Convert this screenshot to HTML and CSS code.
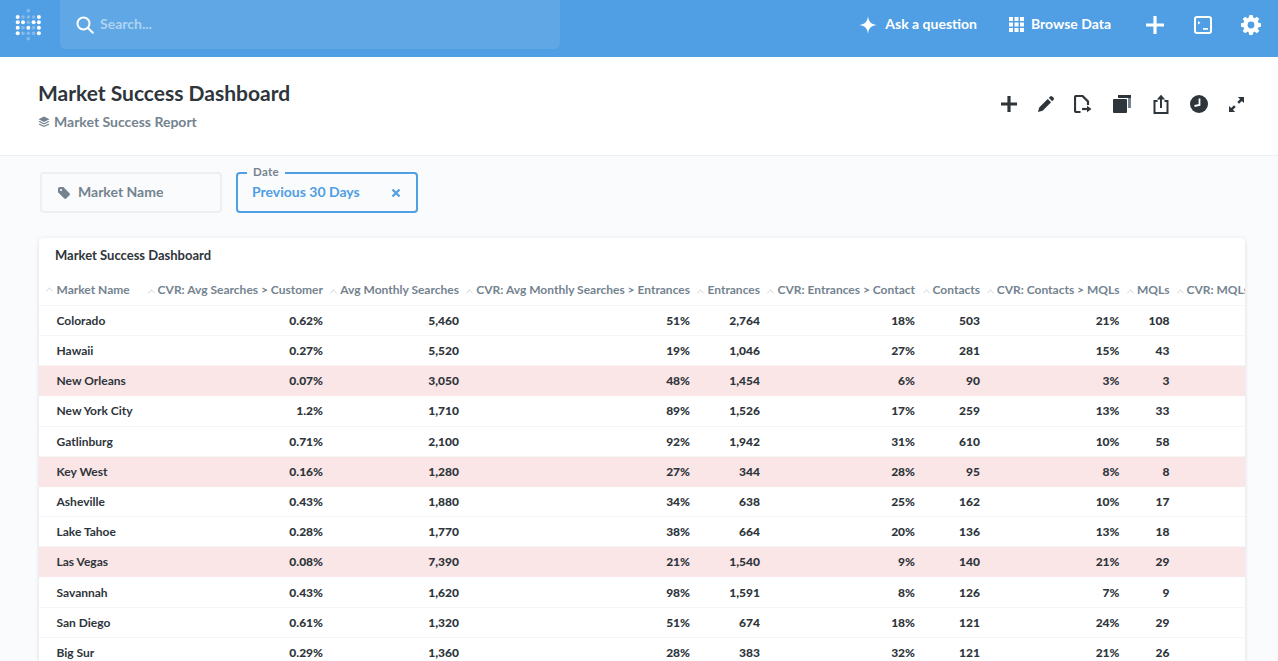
FILE: index.html
```html
<!DOCTYPE html>
<html lang="en">
<head>
<meta charset="utf-8">
<title>Market Success Dashboard</title>
<link rel="stylesheet" href="styles.css">
</head>
<body>
<header class="nav">
  <svg class="logo" width="26" height="32" viewBox="0 0 26 32" fill="#fff">
    <g opacity=".3"><circle cx="13.300" cy="1.700" r="1.800"/><circle cx="8" cy="8" r="1.800"/><circle cx="13.300" cy="8" r="1.800"/><circle cx="18.600" cy="8" r="1.800"/><circle cx="13.300" cy="13.300" r="1.800"/><circle cx="8" cy="18.700" r="1.800"/><circle cx="18.600" cy="18.700" r="1.800"/><circle cx="8" cy="24.300" r="1.800"/><circle cx="13.300" cy="24.300" r="1.800"/><circle cx="18.600" cy="24.300" r="1.800"/><circle cx="13.300" cy="29.700" r="1.800"/></g>
    <circle cx="2.700" cy="8" r="2"/><circle cx="23.900" cy="8" r="2"/><circle cx="2.700" cy="13.300" r="2"/><circle cx="8" cy="13.300" r="2"/><circle cx="18.600" cy="13.300" r="2"/><circle cx="23.900" cy="13.300" r="2"/><circle cx="2.700" cy="18.700" r="2"/><circle cx="13.300" cy="18.700" r="2"/><circle cx="23.900" cy="18.700" r="2"/><circle cx="2.700" cy="24.300" r="2"/><circle cx="23.900" cy="24.300" r="2"/>
  </svg>
  <div class="search">
    <svg width="18" height="18" viewBox="0 0 18 18" fill="none" stroke="#fff" stroke-width="2"><circle cx="7.500" cy="7.500" r="6"/><path d="M12 12l4.800 4.800" stroke-linecap="round"/></svg>
    <span>Search...</span>
  </div>
  <div class="nav-actions">
    <a class="nav-link ask">
      <svg width="18" height="18" viewBox="0 0 18 18" fill="#fff"><path d="M9 0c.6 5.600 2.800 8 8.500 9C11.800 10 9.600 12.400 9 18 8.400 12.400 6.200 10 .5 9 6.200 8 8.400 5.600 9 0z"/></svg>
      <span>Ask a question</span>
    </a>
    <a class="nav-link browse">
      <svg width="15" height="15" viewBox="0 0 15 15" fill="#fff"><rect width="4" height="4"/><rect x="5.500" width="4" height="4"/><rect x="11" width="4" height="4"/><rect y="5.500" width="4" height="4"/><rect x="5.500" y="5.500" width="4" height="4"/><rect x="11" y="5.500" width="4" height="4"/><rect y="11" width="4" height="4"/><rect x="5.500" y="11" width="4" height="4"/><rect x="11" y="11" width="4" height="4"/></svg>
      <span>Browse Data</span>
    </a>
    <svg class="plus" width="18" height="18" viewBox="0 0 18 18" fill="#fff"><path d="M7.400 0h3.200v7.400H18v3.200h-7.400V18H7.400v-7.400H0V7.400h7.400z"/></svg>
    <svg class="sql" width="18" height="18" viewBox="0 0 18 18"><rect x="1" y="1" width="16" height="16" rx="2" fill="none" stroke="#fff" stroke-width="2"/><path d="M4 5l2.500 1.800L4 8.600zM9 12h5v1.800H9z" fill="#fff"/></svg>
    <svg class="gear" width="20" height="20" viewBox="0 0 20 20"><path fill="#fff" fill-rule="evenodd" d="M8.300 0h3.400l.5 2.600 1.500.6 2.200-1.500 2.400 2.400-1.500 2.200.6 1.500 2.600.5v3.400l-2.600.5-.6 1.500 1.500 2.200-2.400 2.400-2.200-1.500-1.500.6-.5 2.600H8.300l-.5-2.600-1.500-.6-2.200 1.500-2.400-2.400 1.500-2.200-.6-1.500L0 11.700V8.300l2.600-.5.6-1.500-1.500-2.200 2.400-2.400 2.200 1.500 1.500-.6zM10 6.600a3.400 3.400 0 1 0 0 6.800 3.400 3.400 0 0 0 0-6.800z"/></svg>
  </div>
</header>

<section class="dash-head">
  <div class="dash-title">
    <h1>Market Success Dashboard</h1>
    <div class="collection">
      <svg width="12" height="12" viewBox="0 0 12 12" fill="#74838f"><path d="M6 .5l5.500 2.700L6 5.900.5 3.200z"/><path d="M1.800 5.100L6 7.200l4.200-2.100 1.300.7L6 8.500.5 5.800z"/><path d="M1.800 7.700L6 9.800l4.200-2.100 1.300.7L6 11.100.5 8.400z"/></svg>
      <span>Market Success Report</span>
    </div>
  </div>
  <div class="dash-tools">
    <svg width="18" height="18" viewBox="0 0 18 18" fill="#2e353b"><path d="M7.400 1h3.200v6.400H17v3.200h-6.400V17H7.400v-6.400H1V7.400h6.400z"/></svg>
    <svg width="18" height="18" viewBox="0 0 18 18" fill="#2e353b"><path d="M1 17l1.200-4.600 8.500-8.500 3.400 3.400-8.500 8.500zM11.800 2.800l1.400-1.400a1.400 1.400 0 0 1 2 0l1.400 1.400a1.400 1.400 0 0 1 0 2l-1.400 1.400z"/></svg>
    <svg width="18" height="18" viewBox="0 0 18 18" fill="none" stroke="#2e353b" stroke-width="2.200"><path d="M6.500 17H2.500A1.500 1.500 0 0 1 1 15.500v-13A1.500 1.500 0 0 1 2.500 1h6L14 6.500V10"/><path d="M8 14h6"/><path d="M13 10.800l4.500 3.200-4.500 3.200z" fill="#2e353b" stroke="none"/></svg>
    <svg width="18" height="18" viewBox="0 0 18 18"><path d="M5 0h13v13h-3V3H5z" fill="#74838f"/><path d="M5 0h13v3H5z" fill="#2e353b"/><rect y="4" width="14" height="14" rx="1" fill="#2e353b"/></svg>
    <svg width="16" height="20" viewBox="0 0 16 20" fill="none" stroke="#2e353b" stroke-width="2"><path d="M4.500 7H1.500v12h13V7h-3"/><path d="M8 14V2.500"/><path d="M3.800 5.500L8 .8l4.200 4.700z" fill="#2e353b" stroke="none"/></svg>
    <svg width="18" height="18" viewBox="0 0 18 18"><circle cx="9" cy="9" r="9" fill="#2e353b"/><path d="M9.500 3.500v6.500L4.500 11" fill="none" stroke="#fff" stroke-width="1.800"/></svg>
    <svg width="15" height="15" viewBox="0 0 16 16" fill="#2e353b"><path d="M9.500 0H16v6.500l-2.300-2.300-3 3-1.900-1.900 3-3zM6.500 16H0V9.500l2.300 2.300 3-3 1.900 1.900-3 3z"/></svg>
  </div>
</section>

<section class="filters">
  <div class="filter idle">
    <svg width="12" height="12" viewBox="0 0 14 14" fill="#74838f"><path d="M0 2.200A2.200 2.200 0 0 1 2.200 0h4l7 7a2 2 0 0 1 0 2.800l-3.400 3.400a2 2 0 0 1-2.800 0l-7-7zM3.500 2.200a1.300 1.300 0 1 0 0 2.600 1.300 1.300 0 0 0 0-2.600z" fill-rule="evenodd"/></svg>
    <span>Market Name</span>
  </div>
  <div class="filter active">
    <span class="legend">Date</span>
    <span>Previous 30 Days</span>
    <svg width="10" height="10" viewBox="0 0 10 10" stroke="#509ee3" stroke-width="2.200"><path d="M1.500 1.500l7 7M8.500 1.500l-7 7"/></svg>
  </div>
</section>

<main class="card">
  <h2>Market Success Dashboard</h2>
  <div class="grid">
    <div class="row head">
      <div class="cell name"><i></i>Market Name</div>
      <div class="cell"><i></i>CVR: Avg Searches &gt; Customer</div>
      <div class="cell"><i></i>Avg Monthly Searches</div>
      <div class="cell"><i></i>CVR: Avg Monthly Searches &gt; Entrances</div>
      <div class="cell"><i></i>Entrances</div>
      <div class="cell"><i></i>CVR: Entrances &gt; Contact</div>
      <div class="cell"><i></i>Contacts</div>
      <div class="cell"><i></i>CVR: Contacts &gt; MQLs</div>
      <div class="cell"><i></i>MQLs</div>
      <div class="cell last"><i></i>CVR: MQLs &gt; Customers</div>
    </div>
    <div class="row"><div class="cell name">Colorado</div><div class="cell">0.62%</div><div class="cell">5,460</div><div class="cell">51%</div><div class="cell">2,764</div><div class="cell">18%</div><div class="cell">503</div><div class="cell">21%</div><div class="cell">108</div></div>
    <div class="row"><div class="cell name">Hawaii</div><div class="cell">0.27%</div><div class="cell">5,520</div><div class="cell">19%</div><div class="cell">1,046</div><div class="cell">27%</div><div class="cell">281</div><div class="cell">15%</div><div class="cell">43</div></div>
    <div class="row low"><div class="cell name">New Orleans</div><div class="cell">0.07%</div><div class="cell">3,050</div><div class="cell">48%</div><div class="cell">1,454</div><div class="cell">6%</div><div class="cell">90</div><div class="cell">3%</div><div class="cell">3</div></div>
    <div class="row"><div class="cell name">New York City</div><div class="cell">1.2%</div><div class="cell">1,710</div><div class="cell">89%</div><div class="cell">1,526</div><div class="cell">17%</div><div class="cell">259</div><div class="cell">13%</div><div class="cell">33</div></div>
    <div class="row"><div class="cell name">Gatlinburg</div><div class="cell">0.71%</div><div class="cell">2,100</div><div class="cell">92%</div><div class="cell">1,942</div><div class="cell">31%</div><div class="cell">610</div><div class="cell">10%</div><div class="cell">58</div></div>
    <div class="row low"><div class="cell name">Key West</div><div class="cell">0.16%</div><div class="cell">1,280</div><div class="cell">27%</div><div class="cell">344</div><div class="cell">28%</div><div class="cell">95</div><div class="cell">8%</div><div class="cell">8</div></div>
    <div class="row"><div class="cell name">Asheville</div><div class="cell">0.43%</div><div class="cell">1,880</div><div class="cell">34%</div><div class="cell">638</div><div class="cell">25%</div><div class="cell">162</div><div class="cell">10%</div><div class="cell">17</div></div>
    <div class="row"><div class="cell name">Lake Tahoe</div><div class="cell">0.28%</div><div class="cell">1,770</div><div class="cell">38%</div><div class="cell">664</div><div class="cell">20%</div><div class="cell">136</div><div class="cell">13%</div><div class="cell">18</div></div>
    <div class="row low"><div class="cell name">Las Vegas</div><div class="cell">0.08%</div><div class="cell">7,390</div><div class="cell">21%</div><div class="cell">1,540</div><div class="cell">9%</div><div class="cell">140</div><div class="cell">21%</div><div class="cell">29</div></div>
    <div class="row"><div class="cell name">Savannah</div><div class="cell">0.43%</div><div class="cell">1,620</div><div class="cell">98%</div><div class="cell">1,591</div><div class="cell">8%</div><div class="cell">126</div><div class="cell">7%</div><div class="cell">9</div></div>
    <div class="row"><div class="cell name">San Diego</div><div class="cell">0.61%</div><div class="cell">1,320</div><div class="cell">51%</div><div class="cell">674</div><div class="cell">18%</div><div class="cell">121</div><div class="cell">24%</div><div class="cell">29</div></div>
    <div class="row"><div class="cell name">Big Sur</div><div class="cell">0.29%</div><div class="cell">1,360</div><div class="cell">28%</div><div class="cell">383</div><div class="cell">32%</div><div class="cell">121</div><div class="cell">21%</div><div class="cell">26</div></div>
  </div>
</main>
</body>
</html>
```

FILE: styles.css
```css
* { box-sizing: border-box; }
html, body { height: 100%; }
body {
  margin: 0;
  height: 661px;
  overflow: hidden;
  background: #f9fbfc;
  color: #2e353b;
  font-family: Lato, "Open Sans", sans-serif;
}

.nav {
  display: flex;
  align-items: flex-start;
  height: 57px;
  background: #509ee3;
  padding-left: 15px;
}
.logo { margin-top: 9px; flex: none; }
.search {
  display: flex;
  align-items: center;
  gap: 6px;
  width: 500px;
  height: 49px;
  margin-left: 19px;
  padding-left: 16px;
  background: #60a7e6;
  border-radius: 0 0 6px 6px;
  font-size: 14px;
  font-weight: 700;
  color: rgba(255, 255, 255, .5);
}
.search span, .nav-link span, .filter > span:not(.legend) { padding-bottom: 2px; }
.nav-actions {
  display: flex;
  align-items: center;
  height: 49px;
  margin-left: auto;
  padding-right: 17px;
  color: #fff;
  font-size: 14px;
  font-weight: 700;
}
.nav-link { display: flex; align-items: center; }
.ask { gap: 8px; }
.browse { gap: 7px; margin-left: 32px; }
.plus { margin-left: 35px; }
.sql { margin-left: 30px; }
.gear { margin-left: 29px; }

.dash-head {
  display: flex;
  justify-content: space-between;
  height: 99px;
  padding: 24px 34px 0 38px;
  background: #fff;
  border-bottom: 1px solid #f0f0f0;
}
.dash-title h1 {
  margin: 0;
  font-size: 21px;
  line-height: 23px;
  font-weight: 700;
}
.collection {
  display: flex;
  align-items: center;
  gap: 4px;
  margin-top: 9px;
  font-size: 14px;
  line-height: 18px;
  font-weight: 700;
  color: #74838f;
}
.dash-tools {
  display: flex;
  align-items: center;
  height: 20px;
  margin-top: 13px;
}
.dash-tools svg:nth-child(2) { margin-left: 19px; }
.dash-tools svg:nth-child(3) { margin-left: 19px; }
.dash-tools svg:nth-child(4) { margin-left: 21px; }
.dash-tools svg:nth-child(5) { margin-left: 22px; }
.dash-tools svg:nth-child(6) { margin-left: 21px; }
.dash-tools svg:nth-child(7) { margin-left: 21px; }

.filters {
  display: flex;
  gap: 14px;
  padding: 16px 0 0 40px;
}
.filter {
  position: relative;
  display: flex;
  align-items: center;
  width: 182px;
  height: 41px;
  border-radius: 4px;
  font-size: 14px;
  font-weight: 700;
}
.filter.idle {
  gap: 8px;
  padding-left: 16px;
  border: 2px solid #eeeff0;
  color: #74838f;
}
.filter.active {
  justify-content: space-between;
  padding: 0 15px 0 14px;
  border: 2px solid #509ee3;
  color: #509ee3;
}
.legend {
  position: absolute;
  top: -9px;
  left: 9px;
  padding: 0 6px;
  background: #f9fbfc;
  font-size: 11.500px;
  line-height: 14px;
  letter-spacing: .3px;
  color: #74838f;
}

.card {
  width: 1206px;
  height: 440px;
  margin: 25px 0 0 39px;
  background: #fff;
  border-radius: 4px 4px 0 0;
  box-shadow: 0 1px 4px rgba(0, 0, 0, .13);
  overflow: hidden;
}
.card h2 {
  margin: 0;
  height: 36px;
  padding: 9px 0 0 16px;
  font-size: 13px;
  line-height: 17px;
  font-weight: 700;
  color: #2e353b;
}
.row {
  display: grid;
  grid-template-columns: 107px 182px 136px 231px 70px 155px 65px 139.500px 50px 160px;
  height: 30.200px;
  align-items: center;
  border-bottom: 1px solid #f5f5f5;
  font-size: 12px;
  font-weight: 900;
  color: #2e353b;
}
.row.head {
  height: 31.800px;
  font-weight: 700;
  color: #74838f;
}
.row.low { background: #fbe6e7; border-bottom-color: #fbe6e7; }
.cell {
  position: relative;
  padding-right: 5px;
  text-align: right;
  white-space: nowrap;
}
.cell.name { text-align: left; padding-left: 17.500px; font-weight: 700; }
.cell.last { text-align: left; padding-left: 3px; padding-right: 0; }
.row.head i {
  display: inline-block;
  width: 5px;
  height: 5px;
  margin-right: 4px;
  border-left: 1px solid #d5dade;
  border-top: 1px solid #d5dade;
  transform: rotate(45deg) translate(1px, 1px);
}
.row.head .cell.name i { position: absolute; left: 8px; top: 5px; margin: 0; }
```
